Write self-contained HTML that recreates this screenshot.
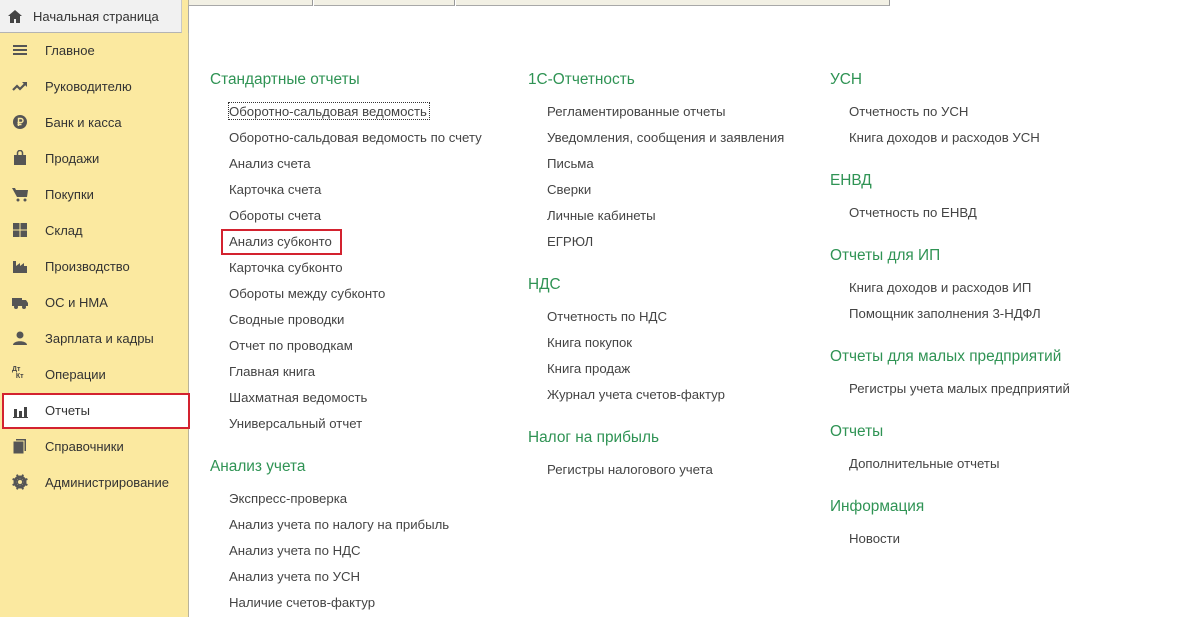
<!DOCTYPE html>
<html><head><meta charset="utf-8"><style>
*{margin:0;padding:0;box-sizing:border-box}
body{width:1179px;height:617px;overflow:hidden;background:#fff;font-family:"Liberation Sans",Arial,sans-serif;position:relative}
.side{position:absolute;left:0;top:0;width:189px;height:617px;background:#fbe9a0;border-right:1px solid #b9b39a}
.home{position:absolute;left:0;top:0;width:182px;height:33px;background:#f1f1f1;border-bottom:1px solid #b4b4b4;border-right:1px solid #c8c8c8;font-size:13px;color:#333;line-height:33px;padding-left:33px}
.home svg{position:absolute;left:8px;top:10px}
.tabs{position:absolute;left:182px;top:0;width:997px;height:6px;background:#fff}
.tabs div{position:absolute;top:0;height:6px;background:#f2f0e4;border-bottom:1px solid #a8a8a8}
.cl{position:absolute;left:188px;top:5px;width:1px;height:28px;background:#aaa}
.nav{position:absolute;left:45px;font-size:13px;color:#333;line-height:16px;margin-top:1px}
.ic{position:absolute;left:12px;width:16px;height:16px}
.sel{position:absolute;left:2px;top:393px;width:188px;height:36px;background:#fff;border:2px solid #d3222f}
.h{position:absolute;font-size:15.4px;color:#2f9354;line-height:18px;white-space:nowrap;margin-top:2px}
.i{position:absolute;font-size:13.2px;color:#444;line-height:16px;white-space:nowrap;margin-top:1px}
.box{position:absolute;left:221px;top:229px;width:121px;height:26px;border:2px solid #d3222f}
.dot{position:absolute;left:228px;top:102px;width:202px;height:18px;border:1px dotted #333}
</style></head><body>
<div class="tabs"><div style="left:0;width:131px;border-right:1px solid #999"></div><div style="left:132px;width:141px;border-right:1px solid #999"></div><div style="left:274px;width:434px;border-right:1px solid #999"></div></div>
<div class="side">
<div class="sel"></div>
</div>
<div class="cl"></div>
<div class="home"><svg width="14" height="13" viewBox="0 0 14 13"><path d="M7 0L0 6h2v7h4V9h2v4h4V6h2z" fill="#444"/></svg>Начальная страница</div>

<svg class="ic" style="top:42px" viewBox="0 0 16 16"><path d="M1 3h14v2H1zM1 7h14v2H1zM1 11h14v2H1z" fill="#555"/></svg>
<div class="nav" style="top:42px">Главное</div>
<svg class="ic" style="top:78px" viewBox="0 0 16 16"><path d="M1 12l4-4 3 3 5-5" stroke="#555" stroke-width="2.2" fill="none"/><path d="M10 4h5v5z" fill="#555"/></svg>
<div class="nav" style="top:78px">Руководителю</div>
<svg class="ic" style="top:114px" viewBox="0 0 16 16"><circle cx="8" cy="8" r="7" fill="#555"/><path d="M6.5 12V4.5h2.5a2 2 0 010 4H5.5M5.5 10.5h4" stroke="#fbe9a0" stroke-width="1.4" fill="none"/></svg>
<div class="nav" style="top:114px">Банк и касса</div>
<svg class="ic" style="top:150px" viewBox="0 0 16 16"><path d="M2 5h12v10H2z" fill="#555"/><path d="M5.5 6V3a2.5 2.5 0 015 0v3" stroke="#555" stroke-width="1.5" fill="none"/></svg>
<div class="nav" style="top:150px">Продажи</div>
<svg class="ic" style="top:186px" viewBox="0 0 16 16"><path d="M0 2h3l1 2h12l-1 7H5z" fill="#555"/><circle cx="6" cy="14" r="1.5" fill="#555"/><circle cx="13" cy="14" r="1.5" fill="#555"/></svg>
<div class="nav" style="top:186px">Покупки</div>
<svg class="ic" style="top:222px" viewBox="0 0 16 16"><path d="M1 1h6.5v6.5H1zM8.5 1H15v6.5H8.5zM1 8.5h6.5V15H1zM8.5 8.5H15V15H8.5z" fill="#555"/></svg>
<div class="nav" style="top:222px">Склад</div>
<svg class="ic" style="top:258px" viewBox="0 0 16 16"><path d="M1 15V3h3v5l4-3v3l4-3v3h3v7z" fill="#555"/></svg>
<div class="nav" style="top:258px">Производство</div>
<svg class="ic" style="top:294px" viewBox="0 0 16 16"><path d="M0 4h10v8H0zM10 6h4l2 3v3h-6z" fill="#555"/><circle cx="4" cy="13" r="2" fill="#555"/><circle cx="12" cy="13" r="2" fill="#555"/></svg>
<div class="nav" style="top:294px">ОС и НМА</div>
<svg class="ic" style="top:330px" viewBox="0 0 16 16"><circle cx="8" cy="5" r="3.5" fill="#555"/><path d="M1 15c0-5 14-5 14 0z" fill="#555"/></svg>
<div class="nav" style="top:330px">Зарплата и кадры</div>
<div class="ic" style="top:366px;font-size:7px;font-weight:bold;color:#444;line-height:7px">Дт<br>&nbsp;&nbsp;Кт</div>
<div class="nav" style="top:366px">Операции</div>
<svg class="ic" style="top:403px" viewBox="0 0 16 16"><path d="M2 6h3v8H2zM7 8h3v6H7zM12 4h3v10h-3zM1 14h15v1H1z" fill="#444"/></svg>
<div class="nav" style="top:402px">Отчеты</div>
<svg class="ic" style="top:438px" viewBox="0 0 16 16"><path d="M4 1h10v12H4z" fill="#555"/><path d="M1 3h11v13H1z" fill="#555" stroke="#fbe9a0" stroke-width="1"/></svg>
<div class="nav" style="top:438px">Справочники</div>
<svg class="ic" style="top:474px" viewBox="0 0 16 16"><circle cx="8" cy="8" r="5" fill="none" stroke="#555" stroke-width="3"/><path d="M7 0h2v16H7zM0 7h16v2H0z" fill="#555" transform="rotate(22.5 8 8)"/><path d="M7 0h2v16H7zM0 7h16v2H0z" fill="#555" transform="rotate(67.5 8 8)"/><circle cx="8" cy="8" r="2" fill="#fbe9a0"/></svg>
<div class="nav" style="top:474px">Администрирование</div>

<div class="dot"></div><div class="box"></div>

<div class="h" style="left:210px;top:69px">Стандартные отчеты</div>
<div class="i" style="left:229px;top:103px">Оборотно-сальдовая ведомость</div>
<div class="i" style="left:229px;top:129px">Оборотно-сальдовая ведомость по счету</div>
<div class="i" style="left:229px;top:155px">Анализ счета</div>
<div class="i" style="left:229px;top:181px">Карточка счета</div>
<div class="i" style="left:229px;top:207px">Обороты счета</div>
<div class="i" style="left:229px;top:233px">Анализ субконто</div>
<div class="i" style="left:229px;top:259px">Карточка субконто</div>
<div class="i" style="left:229px;top:285px">Обороты между субконто</div>
<div class="i" style="left:229px;top:311px">Сводные проводки</div>
<div class="i" style="left:229px;top:337px">Отчет по проводкам</div>
<div class="i" style="left:229px;top:363px">Главная книга</div>
<div class="i" style="left:229px;top:389px">Шахматная ведомость</div>
<div class="i" style="left:229px;top:415px">Универсальный отчет</div>
<div class="h" style="left:210px;top:456px">Анализ учета</div>
<div class="i" style="left:229px;top:490px">Экспресс-проверка</div>
<div class="i" style="left:229px;top:516px">Анализ учета по налогу на прибыль</div>
<div class="i" style="left:229px;top:542px">Анализ учета по НДС</div>
<div class="i" style="left:229px;top:568px">Анализ учета по УСН</div>
<div class="i" style="left:229px;top:594px">Наличие счетов-фактур</div>

<div class="h" style="left:528px;top:69px">1С-Отчетность</div>
<div class="i" style="left:547px;top:103px">Регламентированные отчеты</div>
<div class="i" style="left:547px;top:129px">Уведомления, сообщения и заявления</div>
<div class="i" style="left:547px;top:155px">Письма</div>
<div class="i" style="left:547px;top:181px">Сверки</div>
<div class="i" style="left:547px;top:207px">Личные кабинеты</div>
<div class="i" style="left:547px;top:233px">ЕГРЮЛ</div>
<div class="h" style="left:528px;top:274px">НДС</div>
<div class="i" style="left:547px;top:308px">Отчетность по НДС</div>
<div class="i" style="left:547px;top:334px">Книга покупок</div>
<div class="i" style="left:547px;top:360px">Книга продаж</div>
<div class="i" style="left:547px;top:386px">Журнал учета счетов-фактур</div>
<div class="h" style="left:528px;top:427px">Налог на прибыль</div>
<div class="i" style="left:547px;top:461px">Регистры налогового учета</div>

<div class="h" style="left:830px;top:69px">УСН</div>
<div class="i" style="left:849px;top:103px">Отчетность по УСН</div>
<div class="i" style="left:849px;top:129px">Книга доходов и расходов УСН</div>
<div class="h" style="left:830px;top:170px">ЕНВД</div>
<div class="i" style="left:849px;top:204px">Отчетность по ЕНВД</div>
<div class="h" style="left:830px;top:245px">Отчеты для ИП</div>
<div class="i" style="left:849px;top:279px">Книга доходов и расходов ИП</div>
<div class="i" style="left:849px;top:305px">Помощник заполнения 3-НДФЛ</div>
<div class="h" style="left:830px;top:346px">Отчеты для малых предприятий</div>
<div class="i" style="left:849px;top:380px">Регистры учета малых предприятий</div>
<div class="h" style="left:830px;top:421px">Отчеты</div>
<div class="i" style="left:849px;top:455px">Дополнительные отчеты</div>
<div class="h" style="left:830px;top:496px">Информация</div>
<div class="i" style="left:849px;top:530px">Новости</div>
</body></html>
